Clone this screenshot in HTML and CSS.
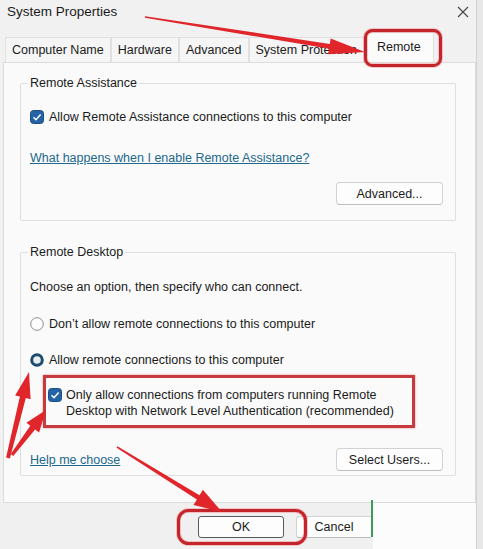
FILE: index.html
```html
<!DOCTYPE html>
<html>
<head>
    <title>System Properties</title>
    <meta name="viewport" content="width=device-width, initial-scale=1.0">
    <link rel="stylesheet" href="styles.css">
</head>
<body>
<div class="screen">
    <div class="window">
        <div class="titlebar">
            <span class="title">System Properties</span>
            <svg class="close" width="12" height="12" viewBox="0 0 12 12">
                <path d="M1 1 L11 11 M11 1 L1 11" stroke="#444" stroke-width="1.1" fill="none"/>
            </svg>
        </div>

        <div class="tabs">
            <div class="tab">Computer Name</div>
            <div class="tab">Hardware</div>
            <div class="tab">Advanced</div>
            <div class="tab">System Protection</div>
            <div class="tab active">Remote</div>
        </div>

        <div class="panel">
            <fieldset class="group">
                <legend>Remote Assistance</legend>
                <label class="check-row first">
                    <svg class="checkbox" width="14" height="14" viewBox="0 0 14 14">
                        <rect x="0.5" y="0.5" width="13" height="13" rx="3" fill="#2464a6" stroke="#1b4f86"/>
                        <path d="M3.5 7.3 L6 9.7 L10.6 4.6" stroke="#fff" stroke-width="1.5" fill="none"/>
                    </svg>
                    <span>Allow Remote Assistance connections to this computer</span>
                </label>
                <a class="link help-ra" href="#">What happens when I enable Remote Assistance?</a>
                <div class="actions">
                    <button class="btn">Advanced...</button>
                </div>
            </fieldset>

            <fieldset class="group second">
                <legend>Remote Desktop</legend>
                <p class="hint">Choose an option, then specify who can connect.</p>
                <label class="check-row radio-first">
                    <svg class="radio" width="14" height="14" viewBox="0 0 14 14">
                        <circle cx="7" cy="7" r="6.3" fill="#fdfdfd" stroke="#8c8c8c"/>
                    </svg>
                    <span>Don’t allow remote connections to this computer</span>
                </label>
                <label class="check-row radio-second">
                    <svg class="radio" width="14" height="14" viewBox="0 0 14 14">
                        <circle cx="7" cy="7" r="5.3" fill="#e7edf1" stroke="#1d4b6b" stroke-width="3"/>
                    </svg>
                    <span>Allow remote connections to this computer</span>
                </label>
                <div class="nla-box">
                    <label class="check-row nla">
                        <svg class="checkbox" width="14" height="14" viewBox="0 0 14 14">
                            <rect x="0.5" y="0.5" width="13" height="13" rx="3" fill="#2464a6" stroke="#1b4f86"/>
                            <path d="M3.5 7.3 L6 9.7 L10.6 4.6" stroke="#fff" stroke-width="1.5" fill="none"/>
                        </svg>
                        <span>Only allow connections from computers running Remote<br>Desktop with Network Level Authentication (recommended)</span>
                    </label>
                </div>
                <div class="actions spread">
                    <a class="link" href="#">Help me choose</a>
                    <button class="btn">Select Users...</button>
                </div>
            </fieldset>
        </div>

        <div class="footer">
            <button class="btn ok">OK</button>
            <button class="btn cancel">Cancel</button>
            <span class="green-mark"></span>
        </div>
    </div>

    <!-- red markup drawn over the dialog -->
    <svg class="annotations" width="483" height="549" viewBox="0 0 483 549">
        <g fill="none">
            <rect x="365.5" y="30.5" width="75" height="35" rx="7" stroke="#e88" stroke-width="5" opacity="0.45"/>
            <rect x="365.5" y="30.5" width="75" height="35" rx="7" stroke="#c4242b" stroke-width="3"/>
            <rect x="178.5" y="510.5" width="127" height="33" rx="10" stroke="#e88" stroke-width="5" opacity="0.45"/>
            <rect x="178.5" y="510.5" width="127" height="33" rx="10" stroke="#c4242b" stroke-width="3"/>
        </g>
        <g fill="#e0262b">
            <polygon points="145.1,16.3 329.8,43.9 330.7,38.4 365,52 328.2,54.2 329.1,48.8 144.9,17.7"/>
            <polygon points="117.4,446.3 199.5,495.2 202.9,489.7 222,512 193.5,505 196.9,499.4 116.6,447.7"/>
            <polygon points="6.1,457.5 19.9,396.6 15.1,395.4 29,372 30.6,399.2 25.8,398 9.9,458.5"/>
            <polygon points="10.8,454.1 30.3,425.8 26.4,422.7 46,410 39.1,432.4 35.1,429.4 13.2,455.9"/>
        </g>
    </svg>
</div>
</body>
</html>
```

FILE: styles.css
```css
body {
    margin: 0;
    background-color: #e8e8e8;
    color: #1b1b1b;
    font-family: "Liberation Sans", Arial, sans-serif;
    font-size: 12.5px;
}

.screen {
    position: relative;
    width: 483px;
    height: 549px;
    overflow: hidden;
}

.window {
    width: 476px;
    height: 549px;
    background-color: #f1f1f1;
    border-right: 1px solid #d2d2d2;
}

.titlebar {
    height: 22px;
    display: flex;
    align-items: center;
    justify-content: space-between;
    padding: 0 7px 0 7px;
    font-size: 13.5px;
}
.close {margin-top: 2px}

.tabs {
    display: flex;
    align-items: flex-end;
    height: 30px;
    margin-top: 10px;
    padding-left: 5px;
}
.tab {
    height: 24px;
    line-height: 24px;
    padding: 0 6px;
    background-color: #f5f5f5;
    border: 1px solid #e0e0e0;
    border-bottom: none;
    white-space: nowrap;
}
.tab.active {
    height: 29px;
    line-height: 28px;
    padding: 0 12px 0 12px;
    background-color: #fbfbfb;
}

.panel {
    height: 441px;
    box-sizing: border-box;
    margin-left: 3px;
    padding: 12px 19px 0 16px;
    background-color: #fafafa;
    border: 1px solid #dcdcdc;
}

.group {
    margin: 0;
    padding: 0 12px 15px 9px;
    border: 1px solid #dedede;
    border-radius: 2px;
}
.group legend {
    padding: 0 2px;
    margin-left: -2px;
    line-height: 16px;
}
.group.second {
    margin-top: 23px;
    padding-bottom: 4px;
}

.check-row {
    display: flex;
    align-items: center;
    gap: 5px;
    line-height: 16px;
}
.check-row.first {margin-top: 18px}
.radio-first {margin-top: 21px}
.radio-second {margin-top: 20px}

.hint {
    margin: 19px 0 0 0;
    line-height: 16px;
}

.link {
    display: block;
    width: fit-content;
    line-height: 16px;
    color: #22688c;
    text-decoration: underline;
}
.help-ra {margin-top: 25px}

.actions {
    display: flex;
    justify-content: flex-end;
    align-items: center;
    margin-top: 16px;
}
.actions.spread {
    justify-content: space-between;
    margin-top: 20px;
}

.btn {
    width: 107px;
    height: 23px;
    padding: 0;
    font-family: inherit;
    font-size: 12.5px;
    color: #1b1b1b;
    background-color: #fdfdfd;
    border: 1px solid #d2d2d2;
    border-bottom-color: #bdbdbd;
    border-radius: 4px;
}

.nla-box {
    width: 372px;
    box-sizing: border-box;
    margin: 7px 0 0 13px;
    padding: 9px 0 6px 2px;
    border: 3px solid #c73a3e;
    box-shadow: 0 0 2px rgba(200, 40, 40, 0.5);
}
.check-row.nla {
    align-items: flex-start;
    gap: 4px;
}
.check-row.nla .checkbox {margin-top: 1px}

.footer {
    height: 46px;
    box-sizing: border-box;
    display: flex;
    align-items: flex-start;
    gap: 12px;
    padding: 13px 0 0 198px;
    background: linear-gradient(to right, #f0f0f0 373px, #fcfcfc 373px);
}
.btn.ok {
    width: 86px;
    height: 22px;
    border: 1px solid #5a5a5a;
    border-radius: 3px;
}
.btn.cancel {
    width: 75px;
    height: 22px;
    border-right: none;
    border-radius: 3px 0 0 3px;
}
.green-mark {
    width: 2px;
    height: 37px;
    margin: -16px 0 0 -12px;
    background-color: #3d9a5c;
}

.annotations {
    position: absolute;
    top: 0;
    left: 0;
    pointer-events: none;
}
```
